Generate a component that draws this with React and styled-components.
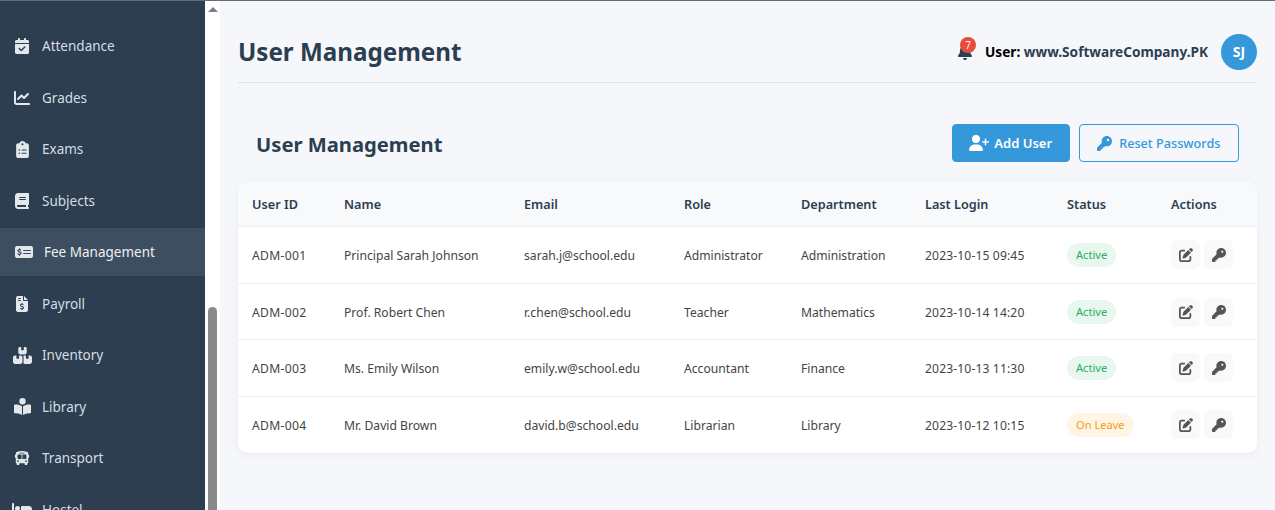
import React from "react";
import styled, { createGlobalStyle } from "styled-components";
import {
  FaCalendarCheck, FaChartLine, FaClipboardList, FaBook, FaMoneyCheckDollar, FaFileInvoiceDollar,
  FaBoxesStacked, FaBookOpenReader, FaBus, FaBed, FaBell, FaUserPlus, FaKey, FaPenToSquare,
} from "react-icons/fa6";

const GlobalStyle = createGlobalStyle`
  html, body { margin: 0; padding: 0; height: 100%; overflow: hidden; }
  body { font-family: "Noto Sans", "Open Sans", "Liberation Sans", sans-serif; background: #f5f7fb; }
`;

const navItems = [
  { label: "Attendance", icon: FaCalendarCheck, size: 16 },
  { label: "Grades", icon: FaChartLine, size: 16 },
  { label: "Exams", icon: FaClipboardList, size: 17 },
  { label: "Subjects", icon: FaBook, size: 16 },
  { label: "Fee Management", icon: FaMoneyCheckDollar, size: 18, active: true },
  { label: "Payroll", icon: FaFileInvoiceDollar, size: 16 },
  { label: "Inventory", icon: FaBoxesStacked, size: 19 },
  { label: "Library", icon: FaBookOpenReader, size: 17 },
  { label: "Transport", icon: FaBus, size: 16 },
  { label: "Hostel", icon: FaBed, size: 20 },
];

const users = [
  ["ADM-001", "Principal Sarah Johnson", "sarah.j@school.edu", "Administrator", "Administration", "2023-10-15 09:45", "Active"],
  ["ADM-002", "Prof. Robert Chen", "r.chen@school.edu", "Teacher", "Mathematics", "2023-10-14 14:20", "Active"],
  ["ADM-003", "Ms. Emily Wilson", "emily.w@school.edu", "Accountant", "Finance", "2023-10-13 11:30", "Active"],
  ["ADM-004", "Mr. David Brown", "david.b@school.edu", "Librarian", "Library", "2023-10-12 10:15", "On Leave"],
];

const columns = [
  { title: "User ID", width: 92 },
  { title: "Name", width: 180 },
  { title: "Email", width: 160 },
  { title: "Role", width: 117 },
  { title: "Department", width: 124 },
  { title: "Last Login", width: 142 },
  { title: "Status", width: 104 },
  { title: "Actions", width: 100 },
];

const App = () => (
  <Page>
    <GlobalStyle />
    <Sidebar>
      <Nav>
        {navItems.map(({ label, icon: Icon, size, active }) => (
          <NavItem key={label} $active={active}>
            <NavIcon $wide={active}><Icon size={size} /></NavIcon>
            {label}
          </NavItem>
        ))}
      </Nav>
    </Sidebar>
    <ScrollTrack>
      <ScrollArrow />
      <ScrollThumb />
    </ScrollTrack>
    <Main>
      <TopBar>
        <PageTitle>User Management</PageTitle>
        <UserArea>
          <BellWrap>
            <FaBell size={16} />
            <BellBadge>7</BellBadge>
          </BellWrap>
          <UserText>User: <UserName>www.SoftwareCompany.PK</UserName></UserText>
          <Avatar>SJ</Avatar>
        </UserArea>
      </TopBar>
      <SectionHeader>
        <SectionTitle>User Management</SectionTitle>
        <ButtonRow>
          <Button $primary><FaUserPlus size={20} />Add User</Button>
          <Button><FaKey size={15} />Reset Passwords</Button>
        </ButtonRow>
      </SectionHeader>
      <TableCard>
        <Table>
          <colgroup>
            {columns.map((c) => <col key={c.title} width={c.width} />)}
          </colgroup>
          <thead>
            <tr>{columns.map((c) => <Th key={c.title}>{c.title}</Th>)}</tr>
          </thead>
          <tbody>
            {users.map((u) => (
              <Row key={u[0]}>
                <CodeCell>{u[0]}</CodeCell>
                {u.slice(1, 5).map((v) => <Td key={v}>{v}</Td>)}
                <DateCell>{u[5]}</DateCell>
                <ControlCell><Badge $leave={u[6] !== "Active"}>{u[6]}</Badge></ControlCell>
                <ControlCell>
                  <Actions>
                    <ActionButton><FaPenToSquare /></ActionButton>
                    <ActionButton><FaKey /></ActionButton>
                  </Actions>
                </ControlCell>
              </Row>
            ))}
          </tbody>
        </Table>
      </TableCard>
    </Main>
  </Page>
);

const Page = styled.div`
  display: flex;
  height: 510px;
  overflow: hidden;
  border-top: 1px solid #5f6e7d;
  box-sizing: border-box;
`;

const Sidebar = styled.aside`
  width: 205px;
  flex: none;
  background: #2c3e50;
  overflow: hidden;
`;

const Nav = styled.nav`
  display: flex;
  flex-direction: column;
  gap: 4px;
  padding-top: 21.3px;
`;

const NavItem = styled.div`
  display: flex;
  align-items: center;
  height: 47.5px;
  flex: none;
  padding-left: 14px;
  font-size: 13.5px;
  color: ${(p) => (p.$active ? "#ecf0f1" : "#d5dde3")};
  background: ${(p) => (p.$active ? "#3c4e60" : "transparent")};
`;

const NavIcon = styled.span`
  display: inline-flex;
  justify-content: center;
  flex: none;
  width: ${(p) => (p.$wide ? "18px" : "16px")};
  margin-left: ${(p) => (p.$wide ? "1px" : "0")};
  margin-right: ${(p) => (p.$wide ? "11px" : "12px")};
  color: #e3e8ec;

  svg {
    flex: none;
  }
`;

const ScrollTrack = styled.div`
  width: 15px;
  flex: none;
  background: #fff;
  display: flex;
  flex-direction: column;
  align-items: center;
`;

const ScrollArrow = styled.div`
  margin-top: 6px;
  border-left: 5px solid transparent;
  border-right: 5px solid transparent;
  border-bottom: 5px solid #7d7d7d;
`;

const ScrollThumb = styled.div`
  margin-top: 295px;
  width: 9px;
  flex: 1;
  background: #8a8a8a;
  border-radius: 5px 5px 0 0;
`;

const Main = styled.main`
  flex: 1;
  min-width: 0;
  padding: 0 18px;
`;

const TopBar = styled.header`
  display: flex;
  justify-content: space-between;
  align-items: center;
  height: 61px;
  padding-top: 20px;
  border-bottom: 1px solid #dfe3ea;
`;

const PageTitle = styled.h1`
  margin: 0;
  font-size: 24.2px;
  font-weight: 700;
  color: #2c3e50;
`;

const UserArea = styled.div`
  display: flex;
  align-items: center;
`;

const BellWrap = styled.span`
  position: relative;
  display: inline-flex;
  color: #2c3e50;
  margin-right: 12px;
`;

const BellBadge = styled.span`
  position: absolute;
  top: -7px;
  left: 3px;
  width: 16px;
  height: 16px;
  border-radius: 50%;
  background: #e74c3c;
  color: #fff;
  font-size: 10px;
  display: flex;
  align-items: center;
  justify-content: center;
`;

const UserText = styled.span`
  font-size: 13.65px;
  font-weight: 700;
  color: #000;
`;

const UserName = styled.span`
  color: #2c3e50;
`;

const Avatar = styled.div`
  width: 36px;
  height: 36px;
  margin-left: 13px;
  border-radius: 50%;
  background: #3498db;
  color: #fff;
  font-size: 14px;
  font-weight: 700;
  display: flex;
  align-items: center;
  justify-content: center;
`;

const SectionHeader = styled.div`
  display: flex;
  justify-content: space-between;
  align-items: center;
  padding: 41px 18px 19px;
`;

const SectionTitle = styled.h2`
  margin: 0;
  padding-top: 2px;
  font-size: 20.2px;
  font-weight: 700;
  color: #2c3e50;
`;

const ButtonRow = styled.div`
  display: flex;
  gap: 9px;
`;

const Button = styled.button`
  display: inline-flex;
  align-items: center;
  justify-content: center;
  gap: ${(p) => (p.$primary ? "5px" : "7px")};
  height: 38px;
  padding: 0 ${(p) => (p.$primary ? "16.5px" : "17.5px")};
  border-radius: 4px;
  font-family: "Noto Sans", sans-serif;
  font-size: ${(p) => (p.$primary ? "13px" : "12.7px")};
  font-weight: ${(p) => (p.$primary ? 600 : 500)};
  border: 1px solid #3498db;
  color: ${(p) => (p.$primary ? "#fff" : "#3498db")};
  background: ${(p) => (p.$primary ? "#3498db" : "transparent")};
`;

const TableCard = styled.div`
  background: #fff;
  border-radius: 10px;
  overflow: hidden;
  box-shadow: 0 2px 8px rgba(0, 0, 0, 0.05);
`;

const Table = styled.table`
  width: 100%;
  table-layout: fixed;
  border-collapse: collapse;
`;

const Th = styled.th`
  height: 45px;
  padding: 0 0 0 14px;
  text-align: left;
  font-size: 12.7px;
  font-weight: 600;
  color: #2c3e50;
  background: #f8f9fb;
  border-bottom: 1px solid #eceef1;
`;

const Row = styled.tr`
  height: 56.5px;
  &:not(:last-child) td { border-bottom: 1px solid #eceef1; }
`;

const Td = styled.td`
  padding: 1px 0 0 14px;
  font-size: 12.15px;
  color: #444;
  white-space: nowrap;

  ${Row}:nth-child(2) & {
    padding-top: 2px;
  }
`;

const CodeCell = styled(Td)`
  letter-spacing: 0.3px;
`;

const DateCell = styled(Td)`
  letter-spacing: 0.12px;
`;

const ControlCell = styled(Td)`
  padding-top: 0;
`;

const Badge = styled.span`
  display: inline-block;
  padding: 0 9px;
  line-height: 24px;
  border-radius: 12px;
  font-size: 11.1px;
  color: ${(p) => (p.$leave ? "#f39c12" : "#27ae60")};
  background: ${(p) => (p.$leave ? "#fef5e7" : "#e8f8ef")};
`;

const Actions = styled.div`
  display: flex;
  gap: 4px;
`;

const ActionButton = styled.span`
  width: 29px;
  height: 29px;
  border-radius: 6px;
  background: #f8f9fa;
  color: #555;
  font-size: 14px;
  display: flex;
  align-items: center;
  justify-content: center;
`;

export default App;
